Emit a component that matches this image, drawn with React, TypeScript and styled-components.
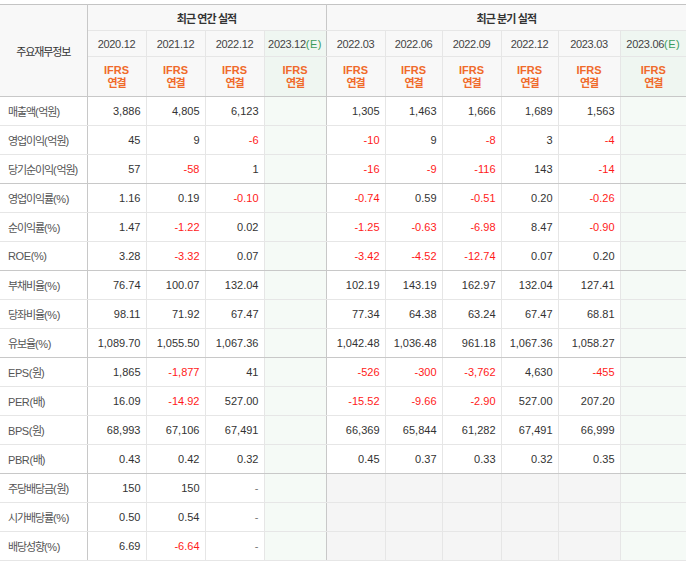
import React from "react";
import styled, { createGlobalStyle } from "styled-components";

const Global = createGlobalStyle`
  html, body { margin: 0; padding: 0; background: #fff; }
  body { font-family: "Liberation Sans", "Noto Sans CJK KR", sans-serif; }
`;

const Wrap = styled.div`
  padding-top: 4px;
  width: 686px;
`;

const Table = styled.table`
  width: 686px;
  border-collapse: collapse;
  table-layout: fixed;
  border-top: 1px solid #c4c4c4;
  border-bottom: 1px solid #c4c4c4;
  font-size: 11px;
`;

const HeadRow = styled.tr<{ $h: number }>`
  height: ${(p) => p.$h}px;
`;

const BodyRow = styled.tr`
  height: 29px;
`;

const CornerCell = styled.th`
  background: #f8f8f8;
  color: #333;
  font-weight: normal;
  font-size: 11px;
  letter-spacing: -1.1px;
  text-align: center;
  vertical-align: middle;
  border-right: 1px solid #c8c8c8;
  border-bottom: 1px solid #c8c8c8;
  padding: 0;
`;

const GroupCell = styled.th<{ $last?: boolean }>`
  background: #f8f8f8;
  color: #333;
  font-weight: bold;
  font-size: 11px;
  letter-spacing: -0.9px;
  text-align: center;
  padding: 0;
  border-bottom: 1px solid #e6e6e6;
  border-right: ${(p) => (p.$last ? "none" : "1px solid #c8c8c8")};
`;

const DateCell = styled.th<{ $est?: boolean; $sectionEnd?: boolean; $last?: boolean }>`
  background: ${(p) => (p.$est ? "#eff6f1" : "#f8f8f8")};
  color: #444;
  font-weight: normal;
  font-size: 11px;
  letter-spacing: -0.3px;
  text-align: center;
  padding: 0;
  white-space: nowrap;
  border-bottom: 1px solid #e6e6e6;
  border-right: ${(p) =>
    p.$last ? "none" : p.$sectionEnd ? "1px solid #c8c8c8" : "1px solid #e6e6e6"};
`;

const Est = styled.span`
  color: #3a9b5c;
  letter-spacing: 0.5px;
`;

const StdCell = styled.th<{ $est?: boolean; $sectionEnd?: boolean; $last?: boolean }>`
  background: ${(p) => (p.$est ? "#eff6f1" : "#f8f8f8")};
  color: #f06a2a;
  font-weight: bold;
  font-size: 11px;
  line-height: 13px;
  text-align: center;
  padding: 0;
  border-bottom: 1px solid #c8c8c8;
  border-right: ${(p) =>
    p.$last ? "none" : p.$sectionEnd ? "1px solid #c8c8c8" : "1px solid #e6e6e6"};
`;

const Kor = styled.span`
  display: block;
  letter-spacing: -1px;
`;

const LabelCell = styled.th<{ $groupEnd?: boolean }>`
  background: #fff;
  color: #555;
  font-weight: normal;
  font-size: 11px;
  text-align: left;
  padding: 0 0 0 8px;
  white-space: nowrap;
  border-right: 1px solid #c8c8c8;
  border-bottom: 1px solid ${(p) => (p.$groupEnd ? "#c8c8c8" : "#e6e6e6")};
`;

const Hangul = styled.span`
  letter-spacing: -1.1px;
`;

const Latin = styled.span`
  letter-spacing: -0.4px;
`;

const ValueCell = styled.td<{
  $est?: boolean;
  $gray?: boolean;
  $neg?: boolean;
  $dash?: boolean;
  $groupEnd?: boolean;
  $sectionEnd?: boolean;
  $last?: boolean;
}>`
  background: ${(p) => (p.$est ? "#f5faf6" : p.$gray ? "#f5f5f5" : "#fff")};
  color: ${(p) => (p.$neg ? "#ff1a1a" : p.$dash ? "#777" : "#333")};
  font-size: 11px;
  text-align: right;
  padding: 0 5px 0 0;
  white-space: nowrap;
  border-bottom: 1px solid ${(p) => (p.$groupEnd ? "#c8c8c8" : "#e6e6e6")};
  border-right: ${(p) =>
    p.$last ? "none" : p.$sectionEnd ? "1px solid #c8c8c8" : "1px solid #e6e6e6"};
`;

const widths = [87, 59, 59, 59, 62, 59, 57, 59, 57, 62, 66];

type Col = { date: string; est?: boolean };
const cols: Col[] = [
  { date: "2020.12" },
  { date: "2021.12" },
  { date: "2022.12" },
  { date: "2023.12", est: true },
  { date: "2022.03" },
  { date: "2022.06" },
  { date: "2022.09" },
  { date: "2022.12" },
  { date: "2023.03" },
  { date: "2023.06", est: true },
];

type Row = { label: string; values: string[]; groupEnd?: boolean; noQuarter?: boolean };

const rows: Row[] = [
  { label: "매출액(억원)", values: ["3,886", "4,805", "6,123", "", "1,305", "1,463", "1,666", "1,689", "1,563", ""] },
  { label: "영업이익(억원)", values: ["45", "9", "-6", "", "-10", "9", "-8", "3", "-4", ""] },
  { label: "당기순이익(억원)", values: ["57", "-58", "1", "", "-16", "-9", "-116", "143", "-14", ""], groupEnd: true },
  { label: "영업이익률(%)", values: ["1.16", "0.19", "-0.10", "", "-0.74", "0.59", "-0.51", "0.20", "-0.26", ""] },
  { label: "순이익률(%)", values: ["1.47", "-1.22", "0.02", "", "-1.25", "-0.63", "-6.98", "8.47", "-0.90", ""] },
  { label: "ROE(%)", values: ["3.28", "-3.32", "0.07", "", "-3.42", "-4.52", "-12.74", "0.07", "0.20", ""], groupEnd: true },
  { label: "부채비율(%)", values: ["76.74", "100.07", "132.04", "", "102.19", "143.19", "162.97", "132.04", "127.41", ""] },
  { label: "당좌비율(%)", values: ["98.11", "71.92", "67.47", "", "77.34", "64.38", "63.24", "67.47", "68.81", ""] },
  { label: "유보율(%)", values: ["1,089.70", "1,055.50", "1,067.36", "", "1,042.48", "1,036.48", "961.18", "1,067.36", "1,058.27", ""], groupEnd: true },
  { label: "EPS(원)", values: ["1,865", "-1,877", "41", "", "-526", "-300", "-3,762", "4,630", "-455", ""] },
  { label: "PER(배)", values: ["16.09", "-14.92", "527.00", "", "-15.52", "-9.66", "-2.90", "527.00", "207.20", ""] },
  { label: "BPS(원)", values: ["68,993", "67,106", "67,491", "", "66,369", "65,844", "61,282", "67,491", "66,999", ""] },
  { label: "PBR(배)", values: ["0.43", "0.42", "0.32", "", "0.45", "0.37", "0.33", "0.32", "0.35", ""], groupEnd: true },
  { label: "주당배당금(원)", values: ["150", "150", "-", "", "", "", "", "", "", ""], noQuarter: true },
  { label: "시가배당률(%)", values: ["0.50", "0.54", "-", "", "", "", "", "", "", ""], noQuarter: true },
  { label: "배당성향(%)", values: ["6.69", "-6.64", "-", "", "", "", "", "", "", ""], noQuarter: true },
];

function Label({ text }: { text: string }) {
  const parts = text.split(/([가-힣]+)/).filter((p) => p.length > 0);
  return (
    <>
      {parts.map((p, i) =>
        /[가-힣]/.test(p) ? <Hangul key={i}>{p}</Hangul> : <Latin key={i}>{p}</Latin>
      )}
    </>
  );
}

export default function App() {
  return (
    <Wrap>
      <Global />
      <Table>
        <colgroup>
          {widths.map((w, i) => (
            <col key={i} style={{ width: w }} />
          ))}
        </colgroup>
        <thead>
          <HeadRow $h={26}>
            <CornerCell rowSpan={3}>주요재무정보</CornerCell>
            <GroupCell colSpan={4}>최근 연간 실적</GroupCell>
            <GroupCell colSpan={6} $last>
              최근 분기 실적
            </GroupCell>
          </HeadRow>
          <HeadRow $h={26}>
            {cols.map((c, i) => (
              <DateCell key={i} $est={c.est} $sectionEnd={i === 3} $last={i === 9}>
                {c.date}
                {c.est && <Est>(E)</Est>}
              </DateCell>
            ))}
          </HeadRow>
          <HeadRow $h={40}>
            {cols.map((c, i) => (
              <StdCell key={i} $est={c.est} $sectionEnd={i === 3} $last={i === 9}>
                IFRS
                <Kor>연결</Kor>
              </StdCell>
            ))}
          </HeadRow>
        </thead>
        <tbody>
          {rows.map((r, ri) => (
            <BodyRow key={ri}>
              <LabelCell $groupEnd={r.groupEnd}>
                <Label text={r.label} />
              </LabelCell>
              {r.values.map((v, i) => {
                const est = cols[i].est;
                const gray = !!r.noQuarter && i >= 4 && !est;
                return (
                  <ValueCell
                    key={i}
                    $est={est}
                    $gray={gray}
                    $neg={v.length > 1 && v.startsWith("-")}
                    $dash={v === "-"}
                    $groupEnd={r.groupEnd}
                    $sectionEnd={i === 3}
                    $last={i === 9}
                  >
                    {v}
                  </ValueCell>
                );
              })}
            </BodyRow>
          ))}
        </tbody>
      </Table>
    </Wrap>
  );
}
